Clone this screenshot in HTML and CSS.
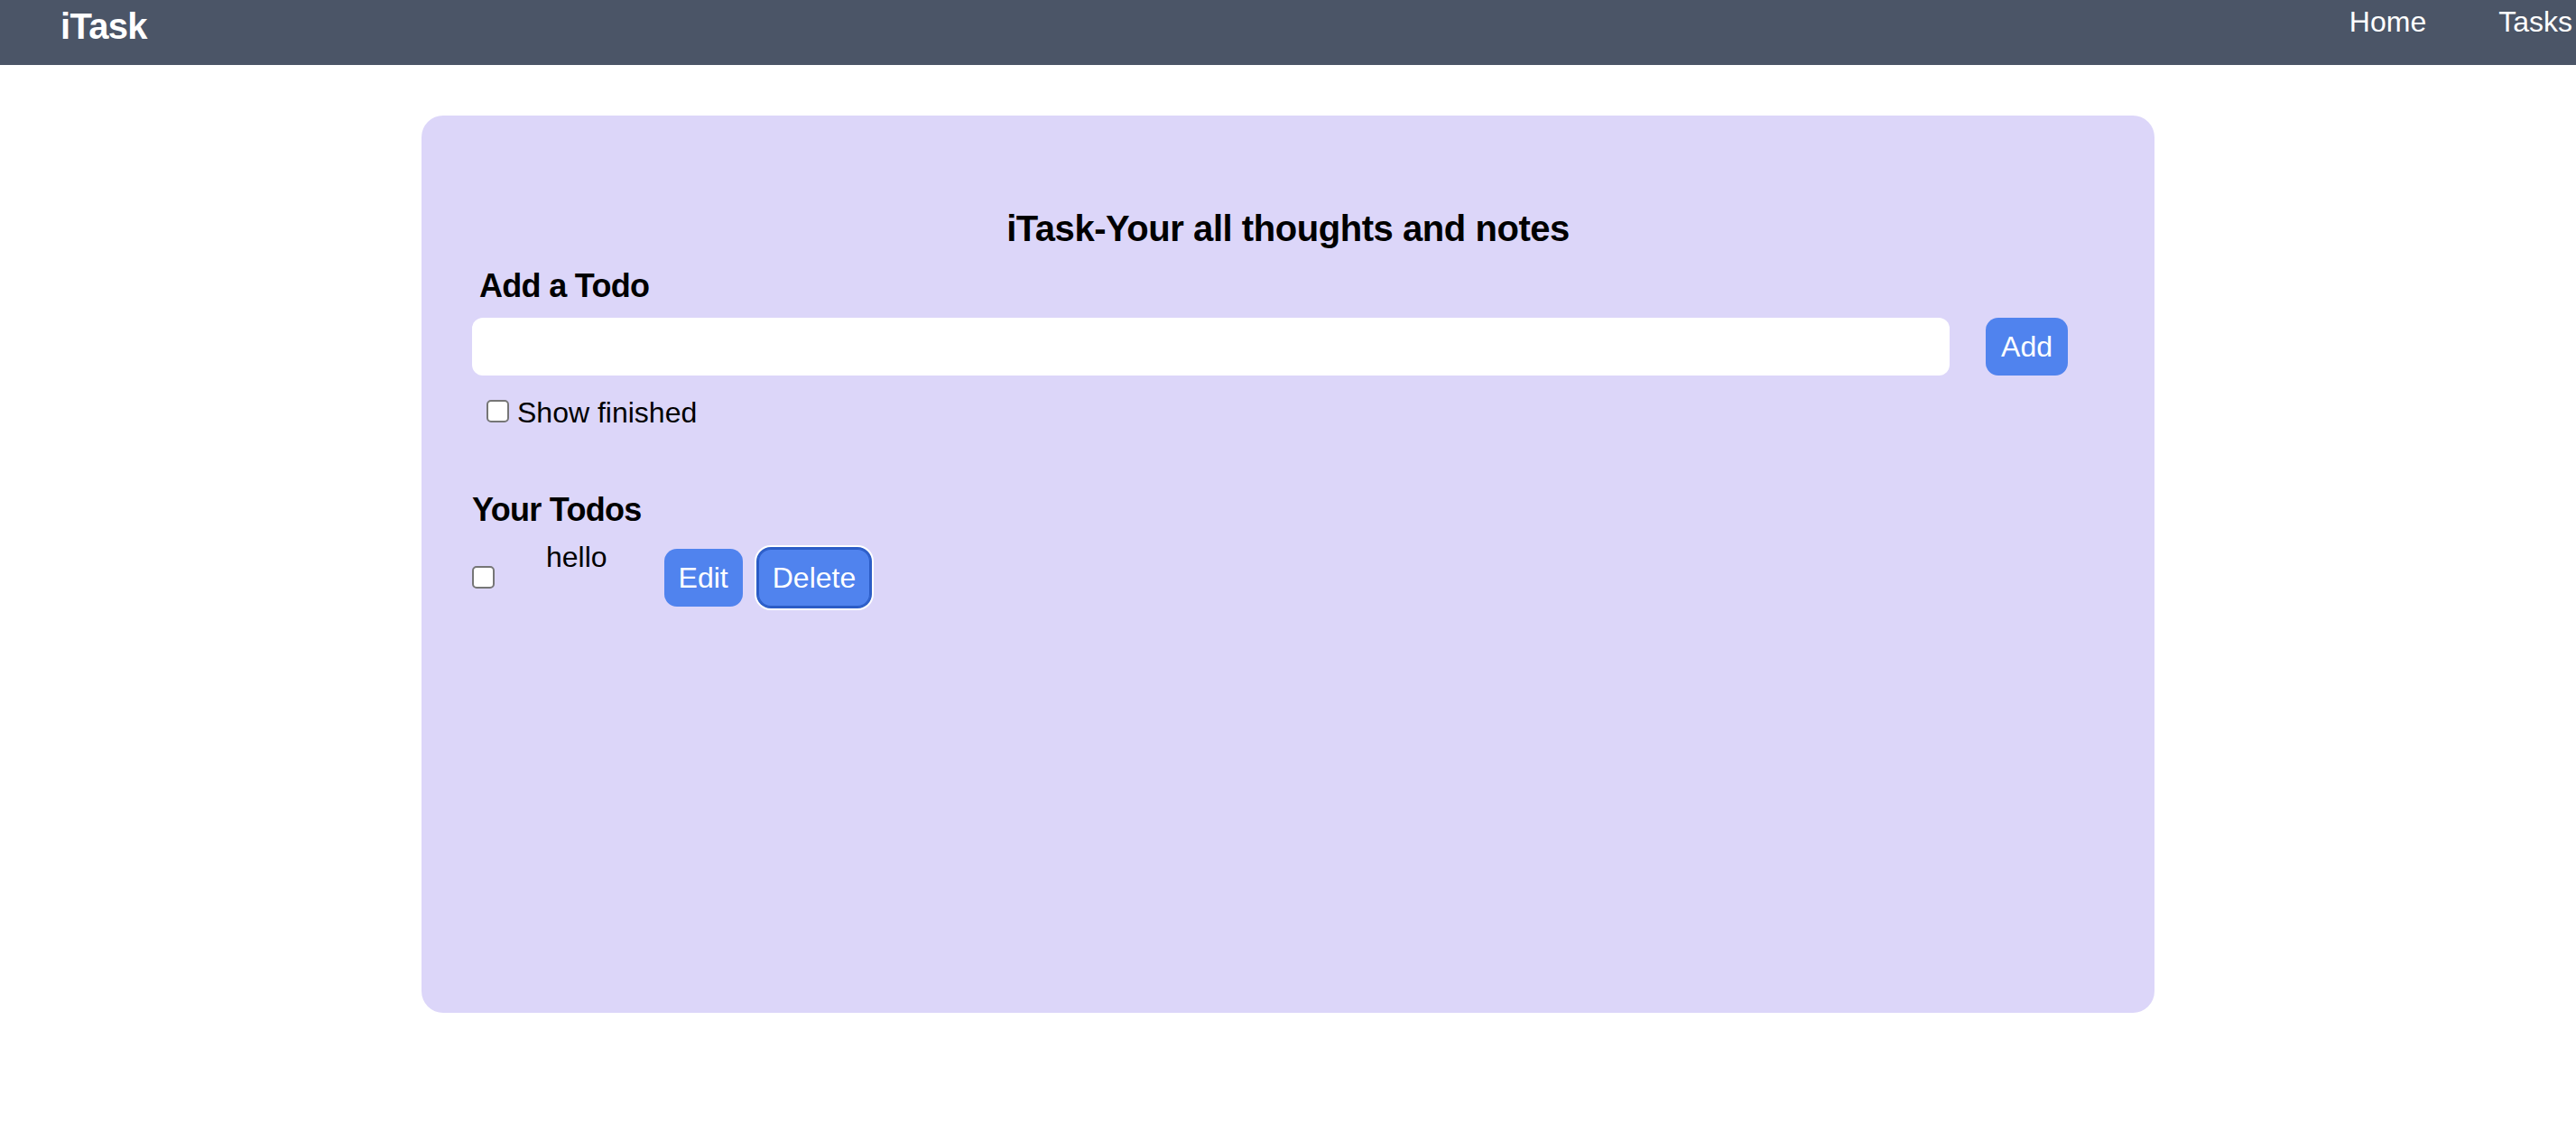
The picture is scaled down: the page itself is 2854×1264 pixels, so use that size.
FILE: index.html
```html
<!DOCTYPE html>
<html lang="en">
<head>
<meta charset="utf-8">
<title>iTask</title>
<link rel="stylesheet" href="styles.css">
</head>
<body>
<nav class="navbar">
  <div class="logo">iTask</div>
  <ul class="nav-links">
    <li>Home</li>
    <li>Tasks</li>
  </ul>
</nav>
<main class="card">
  <h1 class="title">iTask-Your all thoughts and notes</h1>
  <h2 class="add-heading">Add a Todo</h2>
  <div class="add-row">
    <input class="todo-input" type="text">
    <button class="btn btn-add">Add</button>
  </div>
  <label class="show-finished">
    <span class="check"></span>
    <span>Show finished</span>
  </label>
  <h2 class="list-heading">Your Todos</h2>
  <div class="todo-row">
    <span class="check check-todo"></span>
    <div class="todo-text">hello</div>
    <div class="todo-actions">
      <button class="btn">Edit</button>
      <button class="btn btn-focus">Delete</button>
    </div>
  </div>
</main>
</body>
</html>
```
FILE: styles.css
```css
* { box-sizing: border-box; }
body {
  margin: 0;
  font-family: "Liberation Sans", Arial, sans-serif;
  color: #000;
  background: #fff;
}
.navbar {
  display: flex;
  justify-content: space-between;
  align-items: flex-start;
  height: 72px;
  background: #4b5567;
  color: #fff;
}
.logo {
  margin: 1px 0 0 67px;
  font-size: 40px;
  font-weight: 700;
  line-height: 56px;
  letter-spacing: -0.7px;
}
.nav-links {
  display: flex;
  gap: 80px;
  margin: 0 4px 0 0;
  padding: 0;
  list-style: none;
  font-size: 32px;
  line-height: 48px;
}
.card {
  width: 1920px;
  height: 994px;
  margin: 56px auto 0;
  padding: 40px 56px;
  background: #dcd6f9;
  border-radius: 24px;
}
.title {
  margin: 57px 0 0;
  text-align: center;
  font-size: 40px;
  line-height: 56px;
  font-weight: 700;
  letter-spacing: -0.45px;
}
.add-heading, .list-heading {
  font-size: 36px;
  line-height: 56px;
  font-weight: 700;
  letter-spacing: -0.7px;
}
.add-heading {
  margin: 8px 0 0 8px;
}
.add-row {
  display: flex;
  gap: 40px;
  margin: 7px 40px 0 0;
}
.todo-input {
  flex: 1;
  height: 64px;
  border: none;
  border-radius: 12px;
  background: #fff;
  font-size: 32px;
  padding: 0 16px;
  outline: none;
}
.btn {
  height: 64px;
  padding: 0 16px;
  border: none;
  border-radius: 14px;
  background: #5083ee;
  color: #fff;
  font-family: inherit;
  font-size: 32px;
  line-height: 64px;
}
.btn-add {
  padding: 0 17px;
}
.show-finished {
  display: flex;
  align-items: flex-start;
  gap: 9px;
  margin: 17px 0 0 16px;
  font-size: 32px;
  line-height: 48px;
}
.check {
  display: block;
  width: 25px;
  height: 25px;
  margin-top: 10px;
  border: 2px solid #767676;
  border-radius: 5px;
  background: #fff;
  flex: none;
}
.list-heading {
  margin: 56px 0 0;
}
.todo-row {
  display: flex;
  align-items: flex-start;
}
.check-todo {
  margin-top: 34px;
}
.todo-text {
  margin-left: 57px;
  font-size: 32px;
  line-height: 48px;
}
.todo-actions {
  display: flex;
  gap: 17px;
  margin: 15px 0 0 63px;
}
.btn-focus {
  box-shadow: inset 0 0 0 1px #2b5cc6, 0 0 0 2px #2b5cc6, 0 0 0 4px #fff;
}
```
